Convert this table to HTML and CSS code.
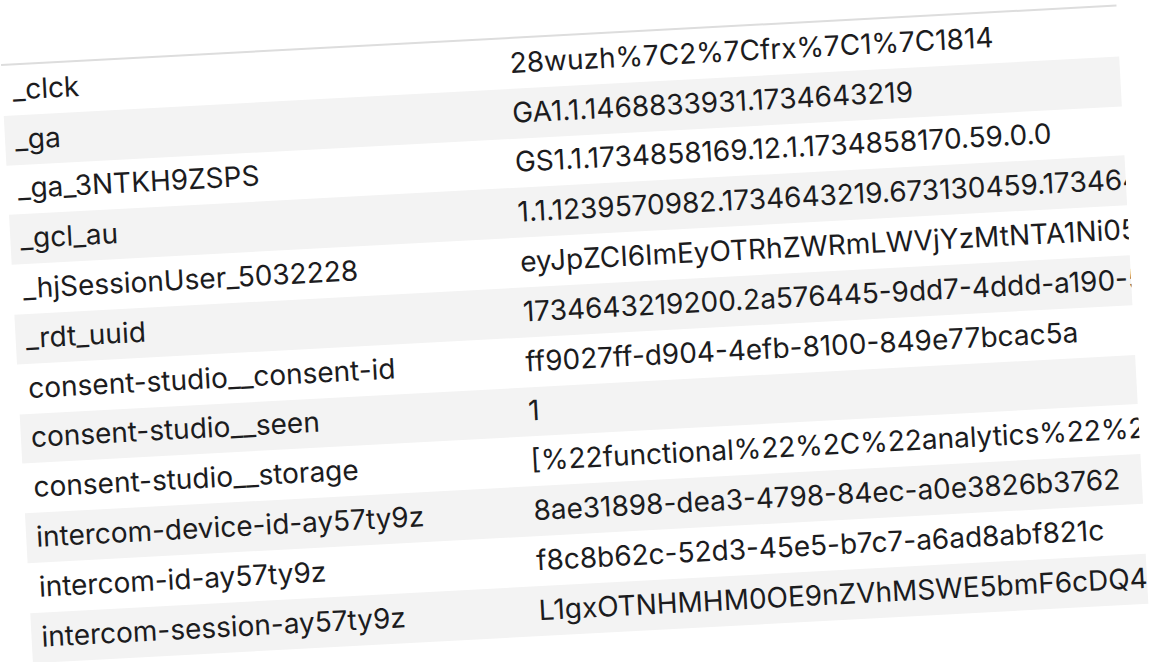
FILE: index.html
```html
<!DOCTYPE html>
<html lang="en">
<head>
<meta charset="utf-8">
<title>Cookies</title>
<link rel="stylesheet" href="styles.css">
</head>
<body>
<div class="sheet">
  <div class="cookie-table">
    <div class="row"><div class="name">_clck</div><div class="value">28wuzh%7C2%7Cfrx%7C1%7C1814</div></div>
    <div class="row"><div class="name">_ga</div><div class="value">GA1.1.1468833931.1734643219</div></div>
    <div class="row"><div class="name">_ga_3NTKH9ZSPS</div><div class="value">GS1.1.1734858169.12.1.1734858170.59.0.0</div></div>
    <div class="row"><div class="name">_gcl_au</div><div class="value">1.1.1239570982.1734643219.673130459.1734643219</div></div>
    <div class="row"><div class="name">_hjSessionUser_5032228</div><div class="value">eyJpZCI6ImEyOTRhZWRmLWVjYzMtNTA1Ni05ZjQ0</div></div>
    <div class="row"><div class="name">_rdt_uuid</div><div class="value">1734643219200.2a576445-9dd7-4ddd-a190-5c3e</div></div>
    <div class="row"><div class="name">consent-studio__consent-id</div><div class="value">ff9027ff-d904-4efb-8100-849e77bcac5a</div></div>
    <div class="row"><div class="name">consent-studio__seen</div><div class="value">1</div></div>
    <div class="row"><div class="name">consent-studio__storage</div><div class="value">[%22functional%22%2C%22analytics%22%2C%22</div></div>
    <div class="row"><div class="name">intercom-device-id-ay57ty9z</div><div class="value">8ae31898-dea3-4798-84ec-a0e3826b3762</div></div>
    <div class="row"><div class="name">intercom-id-ay57ty9z</div><div class="value">f8c8b62c-52d3-45e5-b7c7-a6ad8abf821c</div></div>
    <div class="row"><div class="name">intercom-session-ay57ty9z</div><div class="value">L1gxOTNHMHM0OE9nZVhMSWE5bmF6cDQ4cU</div></div>
  </div>
</div>
</body>
</html>
```

FILE: styles.css
```css
html, body {
  margin: 0;
  padding: 0;
  background: #ffffff;
}

body {
  width: 1150px;
  height: 662px;
  overflow: hidden;
  font-family: Inter, "Noto Sans", "Liberation Sans", sans-serif;
  color: #1c1c1e;
}

.sheet {
  padding-top: 64px;
  padding-left: 1px;
}

.cookie-table {
  width: 1117px;
  border-top: 2px solid #dddddd;
  transform-origin: 0 0;
  transform: rotate(-3.05deg);
  font-size: 28px;
}

.row {
  display: flex;
  align-items: center;
  box-sizing: border-box;
  height: 49.8px;
  padding-bottom: 2px;
}

.row:nth-child(even) {
  background: #f3f3f3;
}

.name {
  flex: 0 0 498px;
  box-sizing: border-box;
  padding-left: 10px;
  white-space: nowrap;
}

.value {
  flex: 1 1 auto;
  min-width: 0;
  padding-left: 10px;
  white-space: nowrap;
  overflow: hidden;
}
```
